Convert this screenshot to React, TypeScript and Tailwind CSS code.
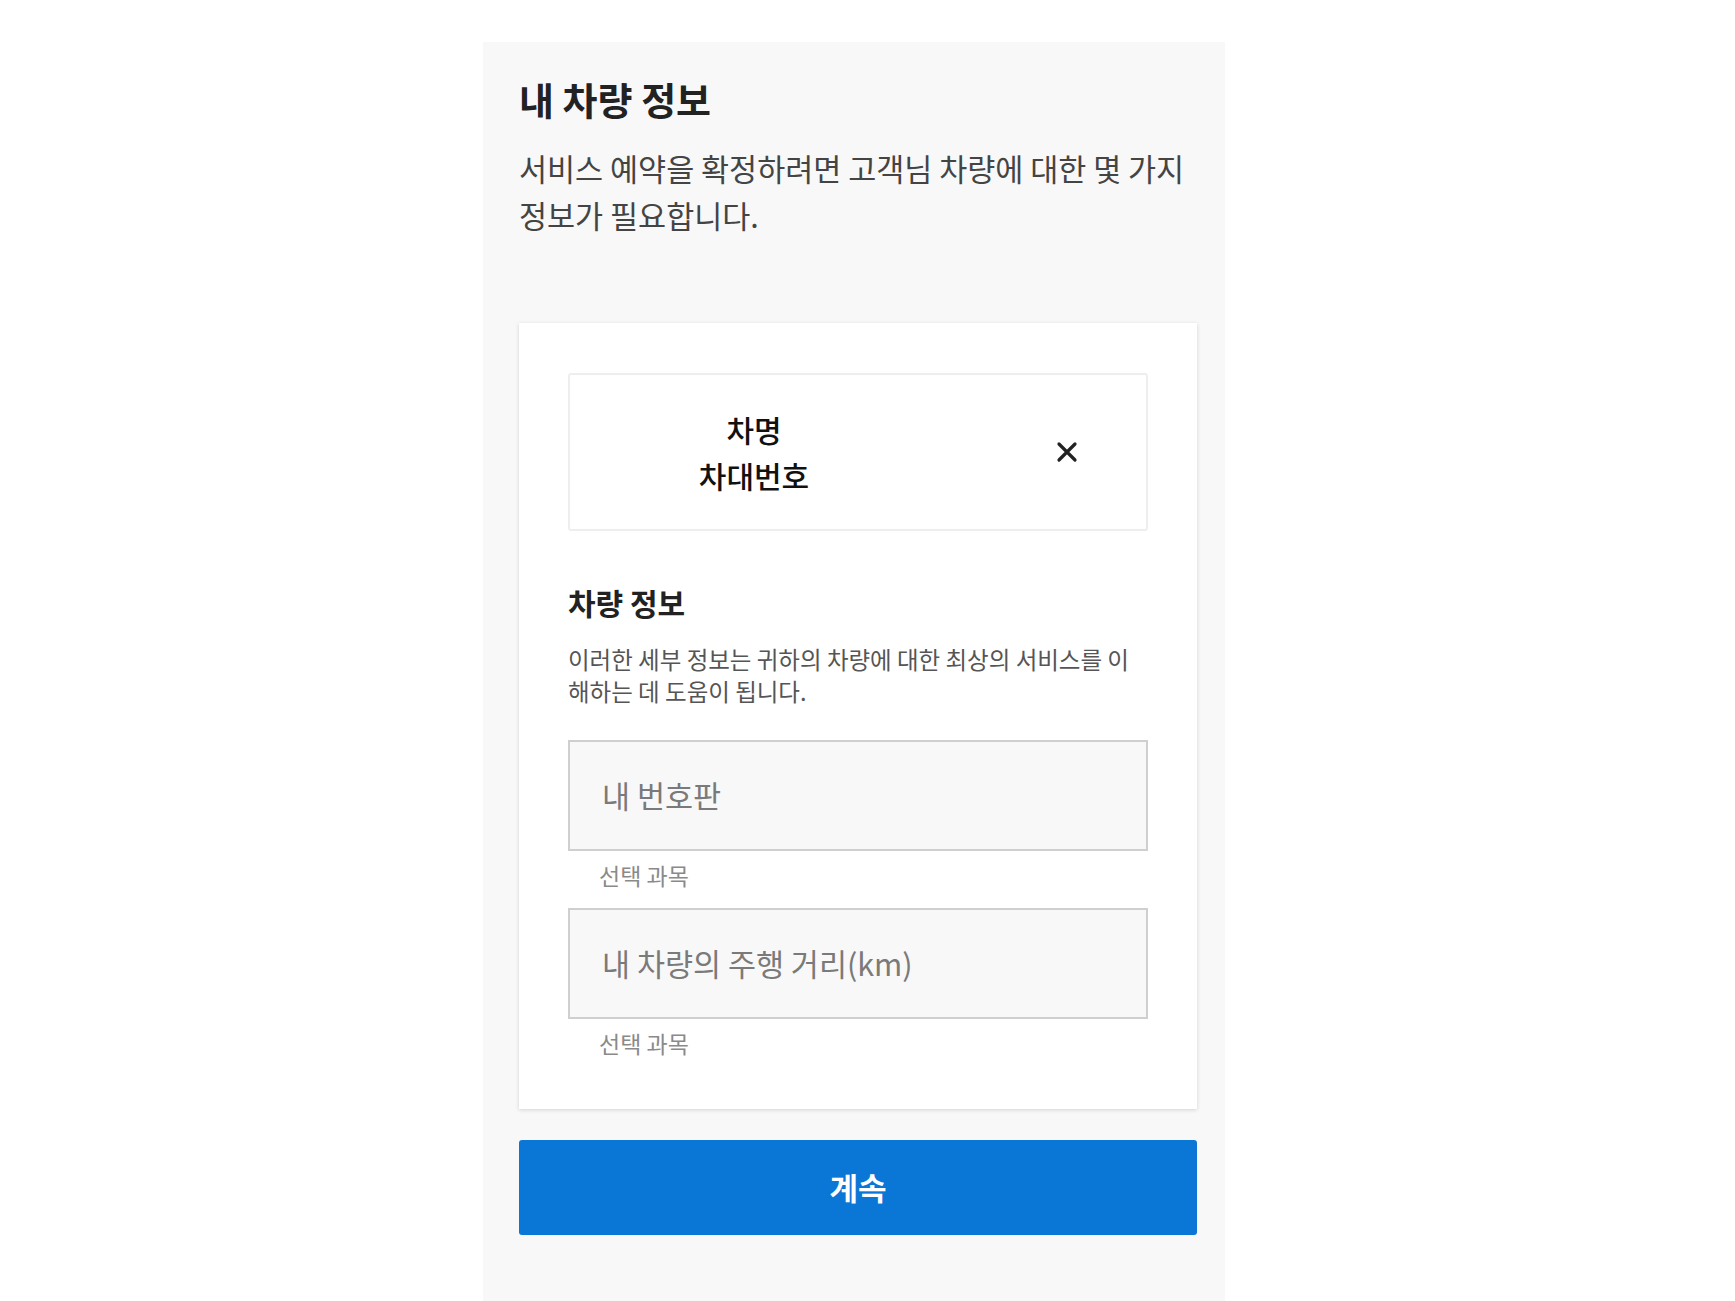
import React from "react";

const font = { fontFamily: '"Noto Sans CJK KR", "Noto Sans", sans-serif' };

function CloseIcon() {
  return (
    <svg width="22" height="22" viewBox="0 0 22 22" fill="none" stroke="#222" strokeWidth="3.2" strokeLinecap="round">
      <path d="M3 3 L19 19 M19 3 L3 19" />
    </svg>
  );
}

function Field({ placeholder }: { placeholder: string }) {
  return (
    <div>
      <div className="h-[111px] border-2 border-[#cfcfcf] bg-[#f8f8f8] flex items-center pl-[32px]">
        <span className="text-[30.5px] text-[#7a7a7a]">{placeholder}</span>
      </div>
      <p className="pl-[31px] mt-[9px] text-[23px] leading-[30px] text-[#8a8a8a]">선택 과목</p>
    </div>
  );
}

export default function App() {
  return (
    <div className="min-h-screen bg-white flex justify-center pr-[27px]" style={font}>
      <div className="mt-[42px] w-[742px] bg-[#f8f8f8] pl-[36px] pr-[28px] pt-[32px] pb-[64px]">
        <h1 className="text-[38px] leading-[49px] font-bold text-[#222]">내 차량 정보</h1>
        <p className="mt-[22px] text-[30.5px] leading-[47px] text-[#444]">
          서비스 예약을 확정하려면 고객님 차량에 대한 몇 가지
          <br />
          정보가 필요합니다.
        </p>

        <div className="mt-[84px] bg-white shadow-[0_1px_4px_rgba(0,0,0,0.15)] px-[49px] pt-[50px] pb-[51px]">
          <div className="h-[158px] border-2 border-[#eeeeee] rounded-[3px] flex items-center">
            <div className="w-[368px] text-center text-[30px] leading-[46px] font-medium text-[#111]">
              <div>차명</div>
              <div>차대번호</div>
            </div>
            <div className="flex-1 flex justify-end pr-[68px]">
              <CloseIcon />
            </div>
          </div>

          <h2 className="mt-[53px] text-[30px] leading-[36px] font-bold text-[#222]">차량 정보</h2>
          <p className="mt-[23px] text-[23.5px] leading-[32px] text-[#555]">
            이러한 세부 정보는 귀하의 차량에 대한 최상의 서비스를 이
            <br />
            해하는 데 도움이 됩니다.
          </p>

          <div className="mt-[33px] flex flex-col gap-[18px]">
            <Field placeholder="내 번호판" />
            <Field placeholder="내 차량의 주행 거리(km)" />
          </div>
        </div>

        <button className="mt-[31px] w-full h-[95px] bg-[#0a76d6] rounded-[3px] text-white text-[31px] font-bold">
          계속
        </button>
      </div>
    </div>
  );
}
